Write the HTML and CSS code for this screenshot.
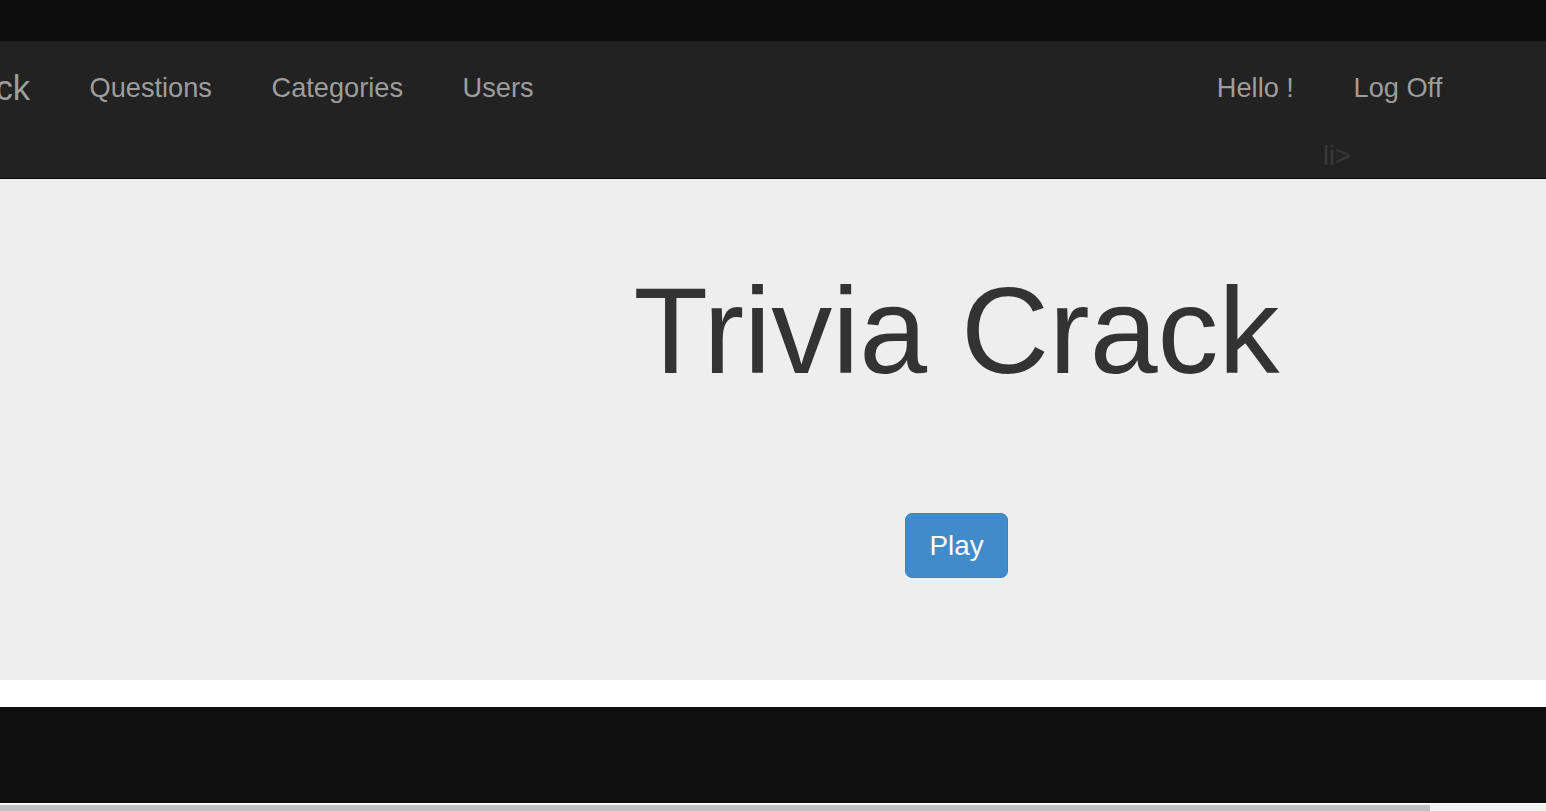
FILE: index.html
```html
<!DOCTYPE html>
<html lang="en">
<head>
<meta charset="utf-8">
<title>Trivia Crack</title>
<link rel="stylesheet" href="styles.css">
</head>
<body>
<div class="topbar"></div>
<nav class="navbar">
  <div class="nav-left">
    <a class="brand" href="#">Trivia Crack</a>
    <ul class="nav">
      <li><a href="#">Questions</a></li>
      <li><a href="#">Categories</a></li>
      <li><a href="#">Users</a></li>
    </ul>
  </div>
  <div class="nav-right">
    <ul class="nav">
      <li><a href="#">Hello !</a></li>
      <li><a href="#">Log Off</a></li>
    </ul>
    <div class="stray">li&gt;</div>
  </div>
</nav>
<section class="jumbotron">
  <div class="jumbo-inner">
    <h1 class="title">Trivia Crack</h1>
    <a class="btn-play" href="#">Play</a>
  </div>
</section>
<div class="spacer"></div>
<footer class="footer"></footer>
<div class="hscroll"><div class="hscroll-thumb"></div></div>
</body>
</html>
```
FILE: styles.css
```css
html, body {
  margin: 0;
  padding: 0;
  overflow: hidden;
}
body {
  font-family: "Liberation Sans", Arial, sans-serif;
  background: #fff;
  width: 1546px;
  height: 811px;
}
.topbar {
  height: 41px;
  background: #0d0d0d;
}
.navbar {
  display: flex;
  justify-content: space-between;
  align-items: flex-start;
  background: #222;
  border-bottom: 1px solid #080808;
}
.nav-left {
  display: flex;
  align-items: flex-start;
}
.brand {
  display: block;
  margin-left: -183px;
  padding: 27.5px 29.5px 29.5px;
  font-size: 34.7px;
  line-height: 38.6px;
  color: #9d9d9d;
  text-decoration: none;
  white-space: nowrap;
}
.nav {
  display: flex;
  list-style: none;
  margin: 0;
  padding: 0;
}
.nav a {
  display: block;
  padding: 27.5px 29.8px 29.5px;
  font-size: 27.2px;
  line-height: 38.6px;
  color: #9d9d9d;
  text-decoration: none;
  white-space: nowrap;
}
.nav-right {
  margin-right: 74px;
}
.stray {
  padding: 0 0 2px 136px;
  font-size: 27px;
  line-height: 39.5px;
  color: #393939;
}
.jumbotron {
  background: #eee;
  padding: 84.5px 0 102px;
}
.jumbo-inner {
  padding-left: 367px;
  text-align: center;
}
.title {
  margin: 0 0 115px;
  font-size: 122px;
  line-height: 134px;
  font-weight: 400;
  color: #333;
}
.btn-play {
  display: inline-block;
  vertical-align: top;
  height: 63px;
  padding: 0 23px;
  font-size: 27.8px;
  line-height: 63px;
  color: #fff;
  background: #428bca;
  border: 1px solid #3a82c4;
  border-radius: 7px;
  text-decoration: none;
}
.spacer {
  height: 27px;
  background: #fff;
}
.footer {
  height: 96px;
  background: #0f0f0f;
}
.hscroll {
  height: 8px;
  background: #f1f1f1;
  border-top: 1px solid #fff;
  box-sizing: border-box;
}
.hscroll-thumb {
  width: 1430px;
  height: 7px;
  margin-top: 1px;
  background: #c1c1c1;
}
```
